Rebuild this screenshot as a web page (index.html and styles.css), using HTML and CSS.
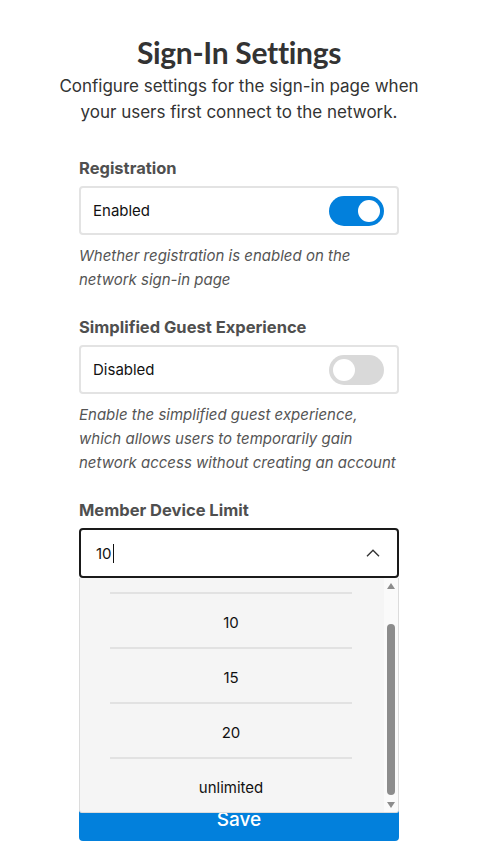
FILE: index.html
```html
<!DOCTYPE html>
<html lang="en">
<head>
<meta charset="utf-8">
<title>Sign-In Settings</title>
<link rel="stylesheet" href="styles.css">
</head>
<body>
<div class="page">
  <main class="panel">
    <h1 class="title">Sign-In Settings</h1>
    <p class="subtitle">Configure settings for the sign-in page when your users first connect to the network.</p>

    <section class="field first">
      <div class="label">Registration</div>
      <div class="box">
        <span class="box-text">Enabled</span>
        <span class="toggle on"><span class="knob"></span></span>
      </div>
      <p class="help">Whether registration is enabled on the network sign-in page</p>
    </section>

    <section class="field">
      <div class="label">Simplified Guest Experience</div>
      <div class="box">
        <span class="box-text">Disabled</span>
        <span class="toggle"><span class="knob"></span></span>
      </div>
      <p class="help">Enable the simplified guest experience, which allows users to temporarily gain network access without creating an account</p>
    </section>

    <section class="field">
      <div class="label">Member Device Limit</div>
      <div class="select-wrap">
        <div class="select">
          <span class="select-value">10<span class="caret"></span></span>
          <svg class="chevron" width="14" height="8" viewBox="0 0 14 8"><path d="M1 7.2 L7 1.2 L13 7.2" fill="none" stroke="#333" stroke-width="1.4"/></svg>
        </div>
        <div class="dropdown">
          <div class="options">
            <div class="lead"></div>
            <div class="option">10</div>
            <div class="option">15</div>
            <div class="option">20</div>
            <div class="option">unlimited</div>
          </div>
          <div class="scrollbar">
            <span class="arrow up"></span>
            <div class="track"><span class="thumb"></span></div>
            <span class="arrow down"></span>
          </div>
        </div>
      </div>
    </section>

    <button class="save">Save</button>
  </main>
</div>
</body>
</html>
```

FILE: styles.css
```css
* { box-sizing: border-box; }
html, body { margin: 0; padding: 0; background: #fff; }
body {
  font-family: "Inter", "Noto Sans", "Liberation Sans", sans-serif;
  color: #333;
}
.page { width: 478px; padding-top: 35px; }
.panel { width: 320px; margin: 0 auto; }

.title {
  margin: 0 -60px;
  text-align: center;
  font-family: "Lato", "Inter", sans-serif;
  font-size: 30px;
  line-height: 34px;
  font-weight: 700;
  color: #333;
  letter-spacing: -0.3px;
}
.subtitle {
  margin: 4px -25px 0;
  text-align: center;
  font-size: 17px;
  line-height: 26px;
  color: #333;
}

.field { margin-top: 23px; }
.field.first { margin-top: 31px; }
.label {
  font-size: 16.5px;
  line-height: 24px;
  font-weight: 700;
  color: #4f4f4f;
}
.box {
  margin-top: 6px;
  height: 49px;
  border: 2px solid #e3e3e3;
  border-radius: 4px;
  display: flex;
  align-items: center;
  justify-content: space-between;
  padding: 0 13px 0 12px;
}
.box-text { font-size: 15px; color: #111; }
.toggle {
  width: 55px;
  height: 30px;
  border-radius: 15px;
  background: #d9d9d9;
  display: flex;
  align-items: center;
  padding: 0 4px;
}
.toggle .knob {
  width: 22px; height: 22px; border-radius: 50%; background: #fff;
}
.toggle.on { background: #0280dc; justify-content: flex-end; }
.help {
  margin: 9px 0 0;
  font-size: 15px;
  line-height: 24px;
  font-style: italic;
  color: #555;
}

.select-wrap { position: relative; margin-top: 6px; }
.select {
  height: 50px;
  border: 2px solid #1a1a1a;
  border-radius: 4px;
  display: flex;
  align-items: center;
  justify-content: space-between;
  padding: 0 17px 0 15px;
}
.select-value { font-size: 15px; color: #111; display: flex; align-items: center; }
.caret { display: inline-block; width: 1px; height: 19px; background: #111; margin-left: 1px; }

.dropdown {
  position: absolute;
  left: 0; top: 100%;
  width: 320px;
  height: 235px;
  background: #f5f5f5;
  border: 1px solid #dcdcdc;
  border-top: none;
  border-radius: 0 0 3px 3px;
  display: flex;
  overflow: hidden;
  z-index: 2;
}
.options { flex: 1; overflow: hidden; padding: 0 32px 0 30px; }
.lead { height: 14px; }
.option {
  height: 55px;
  border-top: 2px solid #e2e2e2;
  padding-top: 3px;
  display: flex;
  align-items: center;
  justify-content: center;
  font-size: 15px;
  color: #111;
}
.scrollbar {
  width: 14px;
  background: #fafafa;
  display: flex;
  flex-direction: column;
  align-items: center;
  padding: 5px 0 4px;
}
.arrow { width: 0; height: 0; border-left: 4.5px solid transparent; border-right: 4.5px solid transparent; }
.arrow.up { border-bottom: 6px solid #8c8c8c; }
.arrow.down { border-top: 6px solid #8c8c8c; }
.track { flex: 1; width: 8px; display: flex; flex-direction: column; padding: 35px 0 7px; }
.thumb { flex: 1; background: #8c8c8c; border-radius: 4px; }

.save {
  display: block;
  width: 320px;
  height: 44px;
  margin-top: 219px;
  border: none;
  border-radius: 4px;
  background: #0280dc;
  color: #fff;
  font-family: inherit;
  font-size: 19px;
  font-weight: 500;
}
```
